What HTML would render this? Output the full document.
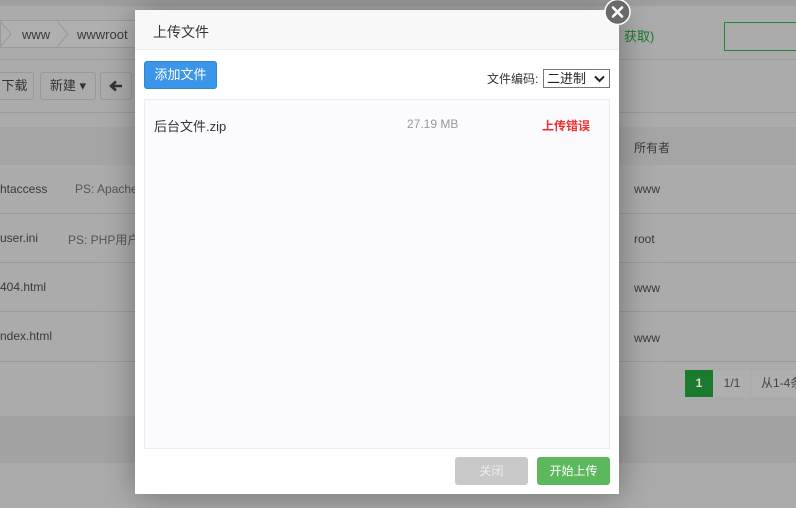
<!DOCTYPE html>
<html><head><meta charset="utf-8"><style>
*{margin:0;padding:0;box-sizing:border-box}
body{width:796px;height:508px;overflow:hidden;background:#ababab;font-family:"Liberation Sans","Noto Sans CJK SC",sans-serif;font-size:12px;color:#333;position:relative}
.a{position:absolute;white-space:nowrap}
.bg{color:#3a3a3a}
.line{position:absolute;left:0;width:796px;height:1px;background:#9a9a9a}
.btn{position:absolute;border:1px solid #999;border-radius:3px;height:28px;line-height:26px;text-align:center;color:#333;font-size:13px}
</style></head><body>
<div class="a" style="left:0;top:0;width:796px;height:6px;background:#9f9f9f"></div>
<div class="a" style="left:0;top:20px;width:140px;height:28px;border:1px solid #999;background:#b0b0b0"></div>
<svg class="a" style="left:0;top:20px" width="140" height="28"><path d="M0 1L11 14L0 27M57 1L68 14L57 27" fill="none" stroke="#999"/></svg>
<div class="a bg" style="left:22px;top:27px;font-size:13px">www</div>
<div class="a bg" style="left:77px;top:27px;font-size:13px">wwwroot</div>
<div class="a" style="left:624px;top:26px;color:#1a7a2a;font-size:13px">获取)</div>
<div class="a" style="left:724px;top:22px;width:80px;height:29px;border:1px solid #1f8a2f"></div>
<div class="line" style="top:59px"></div>
<div class="btn" style="left:-5px;top:72px;width:39px">下载</div>
<div class="btn" style="left:40px;top:72px;width:56px">新建 ▾</div>
<div class="btn" style="left:100px;top:72px;width:32px"><svg width="14" height="12" viewBox="0 0 14 12" style="margin-top:7px"><path d="M13 6H3M7 1.5L2 6L7 10.5" fill="none" stroke="#333" stroke-width="2.6"/></svg></div>
<div class="line" style="top:112px"></div>
<div class="a" style="left:0;top:127px;width:796px;height:38px;background:#a5a5a5"></div>
<div class="a bg" style="left:634px;top:139px">所有者</div>
<div class="a bg" style="left:0;top:182px">htaccess</div><div class="a" style="left:75px;top:182px;color:#555">PS: Apache</div><div class="a bg" style="left:634px;top:182px">www</div>
<div class="line" style="top:213px"></div>
<div class="a bg" style="left:0;top:231px">user.ini</div><div class="a" style="left:68px;top:231px;color:#555">PS: PHP用户</div><div class="a bg" style="left:634px;top:232px">root</div>
<div class="line" style="top:262px"></div>
<div class="a bg" style="left:0;top:280px">404.html</div><div class="a bg" style="left:634px;top:281px">www</div>
<div class="line" style="top:311px"></div>
<div class="a bg" style="left:0;top:329px">ndex.html</div><div class="a bg" style="left:634px;top:331px">www</div>
<div class="line" style="top:361px"></div>
<div class="a" style="left:685px;top:370px;width:28px;height:27px;background:#1c7a2f;color:#ddd;text-align:center;line-height:27px;font-weight:bold">1</div>
<div class="a" style="left:713px;top:370px;width:38px;height:27px;background:#afafaf;color:#444;text-align:center;line-height:27px">1/1</div>
<div class="a" style="left:752px;top:370px;width:50px;height:27px;background:#afafaf;color:#444;line-height:27px;padding-left:9px;overflow:hidden">从1-4条</div>
<div class="a" style="left:0;top:416px;width:796px;height:47px;background:#a3a3a3"></div>

<div class="a" style="left:135px;top:10px;width:484px;height:484px;background:#fff;box-shadow:1px 1px 30px rgba(0,0,0,.35)">
 <div class="a" style="left:0;top:0;width:484px;height:40px;background:#f8f8f8;border-bottom:1px solid #eee"></div>
 <div class="a" style="left:18px;top:12px;font-size:14px;color:#333">上传文件</div>
 <div class="a" style="left:9px;top:51px;width:73px;height:28px;background:#3b95e8;border:1px solid #2f86d6;border-radius:3px;color:#fff;font-size:13px;text-align:center;line-height:26px">添加文件</div>
 <div class="a" style="left:352px;top:60px;font-size:12px;color:#333">文件编码:</div>
 <div class="a" style="left:408px;top:59px;width:67px;height:19px;border:1px solid #777;font-size:13px;line-height:17px;padding-left:3px;color:#222">二进制<svg style="position:absolute;right:4px;top:5px" width="11" height="8"><path d="M1 1.5L5.5 6L10 1.5" fill="none" stroke="#222" stroke-width="2"/></svg></div>
 <div class="a" style="left:9px;top:89px;width:466px;height:350px;background:#fafaff;border:1px solid #ececf0"></div>
 <div class="a" style="left:19px;top:106px;font-size:13px;color:#333">后台文件.zip</div>
 <div class="a" style="left:272px;top:107px;font-size:12px;color:#999">27.19 MB</div>
 <div class="a" style="left:407px;top:107px;font-size:12px;color:#f03030;font-weight:bold">上传错误</div>
 <div class="a" style="left:320px;top:447px;width:73px;height:28px;background:#c8c8c8;border-radius:3px;color:#eee;text-align:center;line-height:28px">关闭</div>
 <div class="a" style="left:402px;top:447px;width:73px;height:28px;background:#5cb85c;border-radius:3px;color:#fff;text-align:center;line-height:28px">开始上传</div>
</div>
<div class="a" style="left:603px;top:0;width:29px;height:26px;"><svg width="29" height="26" viewBox="0 0 29 26"><circle cx="14.5" cy="12" r="12.5" fill="#6a6a6a" stroke="#fff" stroke-width="1.5"/><path d="M10 7.5L19 16.5M19 7.5L10 16.5" stroke="#fff" stroke-width="2.6" stroke-linecap="round"/></svg></div>
</body></html>
